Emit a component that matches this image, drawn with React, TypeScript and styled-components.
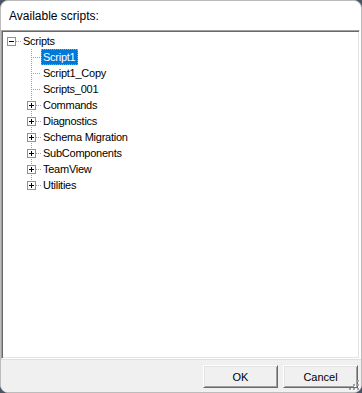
import styled, { createGlobalStyle } from "styled-components";

interface INode {
  label: string;
  children?: INode[];
  expanded?: boolean;
  selected?: boolean;
}

interface IRow {
  node: INode;
  level: number;
  isLast: boolean;
}

const tree: INode[] = [
  {
    label: "Scripts",
    expanded: true,
    children: [
      { label: "Script1", selected: true },
      { label: "Script1_Copy" },
      { label: "Scripts_001" },
      { label: "Commands", children: [{ label: "" }] },
      { label: "Diagnostics", children: [{ label: "" }] },
      { label: "Schema Migration", children: [{ label: "" }] },
      { label: "SubComponents", children: [{ label: "" }] },
      { label: "TeamView", children: [{ label: "" }] },
      { label: "Utilities", children: [{ label: "" }] },
    ],
  },
];

const flatten = (nodes: INode[], level = 0): IRow[] =>
  nodes.flatMap((node, i) => [
    { node, level, isLast: i === nodes.length - 1 },
    ...(node.expanded && node.children ? flatten(node.children, level + 1) : []),
  ]);

const LINE = "#a0a0a0";

// one 20x16 cell of the tree lines: connector, and the +/- box when the node has children
const Connector = ({ row }: { row: IRow }) => {
  const hasKids = !!row.node.children?.length;
  const isRoot = row.level === 0;
  return (
    <svg width="20" height="16" shapeRendering="crispEdges">
      {!isRoot && (
        <line
          x1="8.5"
          y1="0"
          x2="8.5"
          y2={row.isLast ? 9 : 16}
          stroke={LINE}
          strokeDasharray="1 1"
        />
      )}
      <line
        x1={hasKids ? 13 : 10}
        y1="8.5"
        x2="18"
        y2="8.5"
        stroke={LINE}
        strokeDasharray="1 1"
      />
      {hasKids && (
        <g>
          <rect x="4.5" y="4.5" width="8" height="8" fill="#fff" stroke="#919191" />
          <line x1="6" y1="8.5" x2="11" y2="8.5" stroke="#000" />
          {!row.node.expanded && (
            <line x1="8.5" y1="6" x2="8.5" y2="11" stroke="#000" />
          )}
        </g>
      )}
    </svg>
  );
};

const SizeGrip = () => (
  <Grip width="12" height="12" shapeRendering="crispEdges">
    {[
      [9, 1],
      [9, 5],
      [5, 5],
      [9, 9],
      [5, 9],
      [1, 9],
    ].map(([x, y]) => (
      <g key={`${x}-${y}`}>
        <rect x={x + 1} y={y + 1} width="2" height="2" fill="#fff" />
        <rect x={x} y={y} width="2" height="2" fill="#a0a0a0" />
      </g>
    ))}
  </Grip>
);

export default function App() {
  const rows = flatten(tree);
  return (
    <>
      <GlobalStyle />
      <Dialog>
        <Header>Available scripts:</Header>
        <TreeBox>
          {rows.map((row) => (
            <Row key={row.node.label}>
              {Array.from({ length: row.level }).map((_, i) => (
                <Indent key={i} />
              ))}
              <Connector row={row} />
              <Label $selected={row.node.selected}>{row.node.label}</Label>
            </Row>
          ))}
        </TreeBox>
        <Footer>
          <Button>OK</Button>
          <Button>Cancel</Button>
          <SizeGrip />
        </Footer>
      </Dialog>
    </>
  );
}

const GlobalStyle = createGlobalStyle`
  html, body {
    margin: 0;
    padding: 0;
    background: #4a5563;
  }
`;

const Dialog = styled.div`
  width: 362px;
  height: 393px;
  box-sizing: border-box;
  border: 1px solid #bcbcbc;
  border-radius: 8px;
  overflow: hidden;
  background: #fff;
  display: flex;
  flex-direction: column;
  font-family: "Liberation Sans", Arial, sans-serif;
  color: #000;
`;

const Header = styled.div`
  height: 29px;
  flex: none;
  padding-left: 8px;
  display: flex;
  align-items: center;
  font-size: 12px;
`;

const TreeBox = styled.div`
  height: 329px;
  flex: none;
  margin: 0 1px 0 0;
  box-sizing: border-box;
  border-style: solid;
  border-width: 1px;
  border-color: #a0a0a0 #fff #fff #a0a0a0;
  box-shadow: inset 1px 1px #696969, inset -1px -1px #e3e3e3;
  padding: 2px 0 0 1px;
  font-size: 11px;
  letter-spacing: -0.25px;
`;

const Row = styled.div`
  height: 16px;
  display: flex;
  align-items: stretch;
`;

const Indent = styled.div`
  width: 20px;
  flex: none;
`;

const Label = styled.span<{ $selected?: boolean }>`
  margin-left: -2px;
  padding: 0 1px;
  height: 16px;
  box-sizing: border-box;
  line-height: 14px;
  white-space: nowrap;
  border: 1px ${(p) => (p.$selected ? "dotted #ff8728" : "solid transparent")};
  background: ${(p) => (p.$selected ? "#0078d7" : "transparent")};
  color: ${(p) => (p.$selected ? "#fff" : "#000")};
`;

const Footer = styled.div`
  flex: 1;
  position: relative;
  background: #f0f0f0;
  border-top: 1px solid #dfdfdf;
  display: flex;
  justify-content: flex-end;
  align-items: flex-start;
  gap: 5px;
  padding: 5px 3px 0 0;
`;

const Button = styled.button`
  width: 75px;
  height: 23px;
  box-sizing: border-box;
  padding: 0;
  background: #f0f0f0;
  border: 1px solid;
  border-color: #fff #696969 #696969 #fff;
  box-shadow: inset 1px 1px #e3e3e3, inset -1px -1px #a0a0a0;
  font-family: "Liberation Sans", Arial, sans-serif;
  font-size: 11px;
  color: #000;
`;

const Grip = styled.svg`
  position: absolute;
  right: 1px;
  bottom: 1px;
`;
